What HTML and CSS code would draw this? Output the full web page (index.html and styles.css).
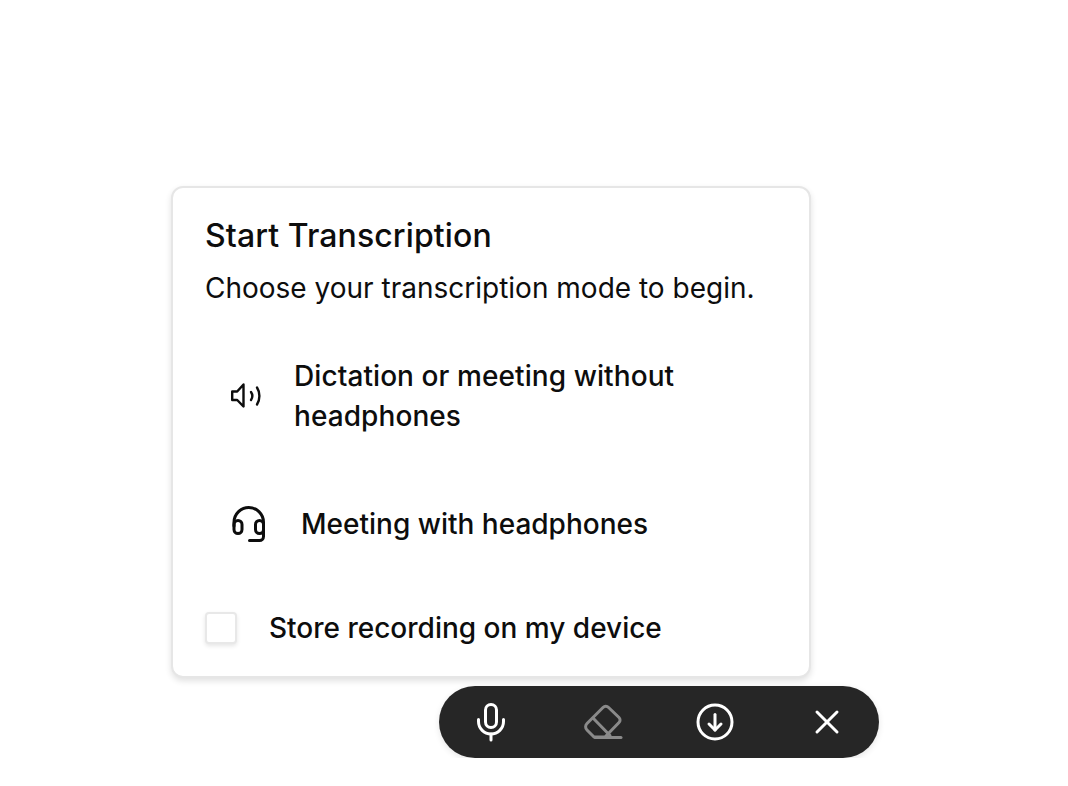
FILE: index.html
```html
<!DOCTYPE html>
<html>
<head>
	<title>Start Transcription</title>
	<meta name="viewport" content="width=device-width, initial-scale=1.0">
	<link rel="stylesheet" href="styles.css">
</head>
<body>
	<div class="page">
		<div class="card">
			<h1 class="card-title">Start Transcription</h1>
			<p class="card-sub">Choose your transcription mode to begin.</p>

			<div class="mode mode-speaker">
				<svg class="mode-icon" width="32" height="32" viewBox="0 0 32 32" fill="none" stroke="#0d0d0d" stroke-width="2.400" stroke-linecap="round" stroke-linejoin="round">
					<path d="M2.200 11.500v8.500h5l6.300 6.500V4.500L7.200 11.500z"/>
					<path d="M21 12c1.700 2.500 1.700 5.500 0 8"/>
					<path d="M27 7.500c3.200 5 3.200 12 0 17"/>
				</svg>
				<span class="mode-text">Dictation or meeting without headphones</span>
			</div>

			<div class="mode mode-headset">
				<svg class="mode-icon" width="36" height="36" viewBox="0 0 36 36" fill="none" stroke="#0d0d0d" stroke-width="3" stroke-linecap="round" stroke-linejoin="round">
					<path d="M3 20v-3.750a14.750 14.750 0 0 1 29.500 0v4.750"/>
					<rect x="3" y="14.500" width="8" height="13" rx="4"/>
					<rect x="24.500" y="14.500" width="8" height="13" rx="4"/>
					<path d="M32.500 21v9.500a4 4 0 0 1-4 4h-10"/>
				</svg>
				<span class="mode-text">Meeting with headphones</span>
			</div>

			<label class="store">
				<span class="store-box"></span>
				<span class="mode-text">Store recording on my device</span>
			</label>
		</div>

		<div class="toolbar">
			<span class="tool">
				<svg width="40" height="40" viewBox="0 0 40 40" fill="none" stroke="#fff" stroke-width="3" stroke-linecap="round" stroke-linejoin="round">
					<rect x="14.500" y="2.500" width="11" height="23" rx="5.500"/>
					<path d="M7.500 17.500v2a12.500 12.500 0 0 0 25 0v-2"/>
					<path d="M20 32v6"/>
				</svg>
			</span>
			<span class="tool">
				<svg width="40" height="40" viewBox="0 0 40 40" fill="none" stroke="#8a8a8a" stroke-width="3" stroke-linecap="round" stroke-linejoin="round">
					<path d="M4 21.500L20 5.500a4 4 0 0 1 5.600 0L36 15.500a3.500 3.500 0 0 1 0 5L22 35H11L4 28a4.500 4.500 0 0 1 0-6.500z"/>
					<path d="M10 16l17 17.500"/>
					<path d="M12 35.500h26"/>
				</svg>
			</span>
			<span class="tool">
				<svg width="40" height="40" viewBox="0 0 40 40" fill="none" stroke="#fff" stroke-width="3" stroke-linecap="round" stroke-linejoin="round">
					<circle cx="20" cy="20" r="17"/>
					<path d="M20 12.500V28"/>
					<path d="M14 22l6 6 6-6"/>
				</svg>
			</span>
			<span class="tool">
				<svg width="40" height="40" viewBox="0 0 40 40" fill="none" stroke="#fff" stroke-width="3" stroke-linecap="round" stroke-linejoin="round">
					<path d="M10 10l20 20"/>
					<path d="M30 10L10 30"/>
				</svg>
			</span>
		</div>
	</div>
</body>
</html>
```

FILE: styles.css
```css
body {
	font-family: "Inter", "Liberation Sans", sans-serif;
	background-color: #ffffff;
	color: #0d0d0d;
	margin: 0;
}
.page {
	display: flex;
	flex-direction: column;
	align-items: flex-start;
	padding: 186px 0 0 171px;
}
.card {
	box-sizing: border-box;
	width: 640px;
	height: 492px;
	padding: 28px 32px 0 32px;
	background-color: #ffffff;
	border: 2px solid #e6e6e6;
	border-radius: 12px;
	box-shadow: 0 3px 6px rgba(0, 0, 0, 0.12);
}
.card-title {
	margin: 0;
	font-size: 32px;
	line-height: 40px;
	font-weight: 500;
	letter-spacing: 0.1px;
}
.card-sub {
	margin: 12px 0 0 0;
	font-size: 28px;
	line-height: 40px;
	font-weight: 400;
}
.mode {
	display: flex;
	align-items: center;
}
.mode-speaker {
	margin-top: 48px;
	padding-left: 25px;
	gap: 32px;
}
.mode-headset {
	margin-top: 68px;
	padding-left: 26px;
	gap: 34px;
}
.mode-text {
	font-size: 28px;
	line-height: 40px;
	font-weight: 500;
}
.mode-speaker .mode-text {
	width: 440px;
	letter-spacing: 0.08px;
}
.store {
	display: flex;
	align-items: center;
	gap: 32px;
	margin-top: 64px;
}
.store-box {
	box-sizing: border-box;
	width: 32px;
	height: 32px;
	background-color: #ffffff;
	border: 2px solid #e8e8e8;
	border-radius: 4px;
	box-shadow: 0 2px 4px rgba(0, 0, 0, 0.1);
}
.toolbar {
	display: flex;
	align-items: center;
	justify-content: space-between;
	box-sizing: border-box;
	width: 440px;
	height: 72px;
	margin: 8px 0 0 268px;
	padding: 0 32px;
	background-color: #262626;
	border-radius: 36px;
	box-shadow: 0 2px 6px rgba(0, 0, 0, 0.1);
}
.tool {
	display: flex;
}
```
